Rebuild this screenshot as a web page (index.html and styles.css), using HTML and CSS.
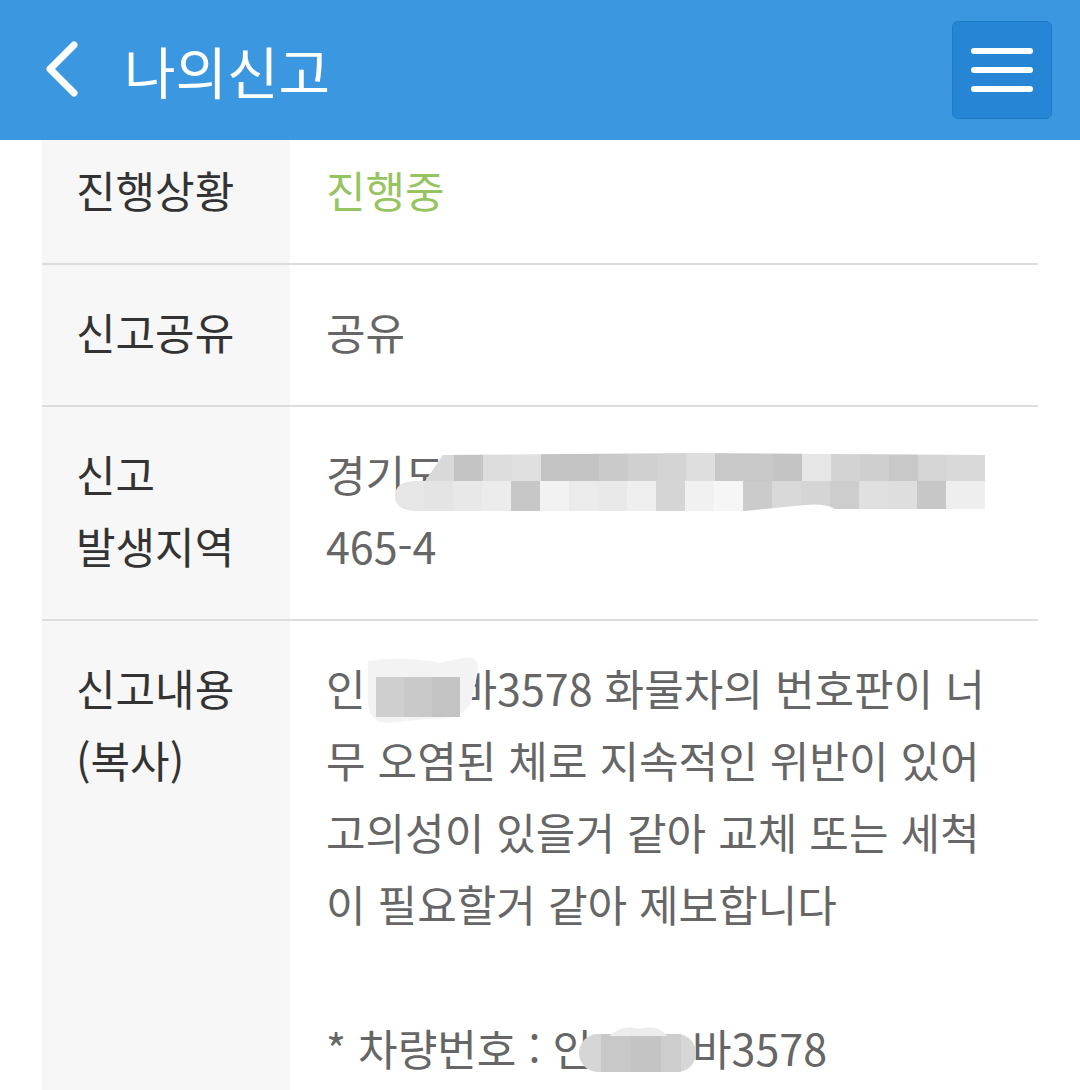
FILE: index.html
```html
<!DOCTYPE html>
<html lang="ko">
<head>
<meta charset="utf-8">
<title>나의신고</title>
<link rel="stylesheet" href="styles.css">
</head>
<body>
<header class="appbar">
  <button class="back" aria-label="뒤로">
    <svg width="40" height="60" viewBox="0 0 40 60"><polyline points="32,5 8,29 32,53" fill="none" stroke="#fff" stroke-width="7" stroke-linecap="round" stroke-linejoin="round"/></svg>
  </button>
  <h1 class="title">나의신고</h1>
  <button class="menu" aria-label="메뉴"><span></span><span></span><span></span></button>
</header>
<main class="detail">
  <div class="row first">
    <div class="label">진행상황</div>
    <div class="value status">진행중</div>
  </div>
  <div class="row">
    <div class="label">신고공유</div>
    <div class="value">공유</div>
  </div>
  <div class="row">
    <div class="label">신고<br>발생지역</div>
    <div class="value addr">경기도<br>465-4
      <svg class="redact-addr" width="590" height="58" viewBox="0 0 590 58">
        <defs>
          <clipPath id="addrclip">
            <path d="M48 2 L300 0 L590 2 L590 56 L440 56 Q430 50 410 52 L350 58 L22 58 Q0 58 0 43 Q0 28 22 28 L30 28 Z"/>
          </clipPath>
        </defs>
        <g clip-path="url(#addrclip)">
          <rect x="30" y="0" width="29" height="28" fill="#d9d9d9"/>
          <rect x="59" y="0" width="29" height="28" fill="#c4c4c4"/>
          <rect x="88" y="0" width="29" height="28" fill="#dcdcdc"/>
          <rect x="117" y="0" width="29" height="28" fill="#e0e0e0"/>
          <rect x="146" y="0" width="29" height="28" fill="#c3c3c3"/>
          <rect x="175" y="0" width="29" height="28" fill="#c3c3c3"/>
          <rect x="204" y="0" width="29" height="28" fill="#cacaca"/>
          <rect x="233" y="0" width="29" height="28" fill="#d0d0d0"/>
          <rect x="262" y="0" width="29" height="28" fill="#d4d4d4"/>
          <rect x="291" y="0" width="29" height="28" fill="#dedede"/>
          <rect x="320" y="0" width="29" height="28" fill="#c8c8c8"/>
          <rect x="349" y="0" width="29" height="28" fill="#c8c8c8"/>
          <rect x="378" y="0" width="29" height="28" fill="#c4c4c4"/>
          <rect x="407" y="0" width="29" height="28" fill="#e6e6e6"/>
          <rect x="436" y="0" width="29" height="28" fill="#d3d3d3"/>
          <rect x="465" y="0" width="29" height="28" fill="#cfcfcf"/>
          <rect x="494" y="0" width="29" height="28" fill="#c8c8c8"/>
          <rect x="523" y="0" width="29" height="28" fill="#d6d6d6"/>
          <rect x="552" y="0" width="38" height="28" fill="#d9d9d9"/>
          <rect x="0" y="28" width="29" height="30" fill="#e6e6e6"/>
          <rect x="29" y="28" width="29" height="30" fill="#e4e4e4"/>
          <rect x="58" y="28" width="29" height="30" fill="#e8e8e8"/>
          <rect x="87" y="28" width="29" height="30" fill="#ececec"/>
          <rect x="116" y="28" width="29" height="30" fill="#c7c7c7"/>
          <rect x="145" y="28" width="29" height="30" fill="#f2f2f2"/>
          <rect x="174" y="28" width="29" height="30" fill="#ebebeb"/>
          <rect x="203" y="28" width="29" height="30" fill="#e9e9e9"/>
          <rect x="232" y="28" width="29" height="30" fill="#efefef"/>
          <rect x="261" y="28" width="29" height="30" fill="#d5d5d5"/>
          <rect x="290" y="28" width="29" height="30" fill="#f1f1f1"/>
          <rect x="319" y="28" width="29" height="30" fill="#f6f6f6"/>
          <rect x="348" y="28" width="29" height="30" fill="#cbcbcb"/>
          <rect x="377" y="28" width="29" height="30" fill="#d9d9d9"/>
          <rect x="406" y="28" width="29" height="30" fill="#d5d5d5"/>
          <rect x="435" y="28" width="29" height="30" fill="#cdcdcd"/>
          <rect x="464" y="28" width="29" height="30" fill="#e0e0e0"/>
          <rect x="493" y="28" width="29" height="30" fill="#dedede"/>
          <rect x="522" y="28" width="29" height="30" fill="#c7c7c7"/>
          <rect x="551" y="28" width="39" height="30" fill="#eeeeee"/>
        </g>
      </svg>
    </div>
  </div>
  <div class="row">
    <div class="label">신고내용<br>(복사)</div>
    <div class="value content">인<span class="hide hide1">
        <svg class="blob1" width="120" height="70" viewBox="0 0 120 70">
          <path d="M6 6 Q40 0 78 8 L100 3 Q118 0 116 16 L110 44 Q104 66 66 64 L24 68 Q4 66 6 40 Z" fill="#f3f3f3"/>
          <rect x="14" y="22" width="28" height="40" fill="#cfcfcf"/>
          <rect x="42" y="22" width="28" height="40" fill="#c9c9c9"/>
          <rect x="70" y="22" width="28" height="40" fill="#c3c3c3"/>
        </svg></span>바3578 화물차의 번호판이 너<br>무 오염된 체로 지속적인 위반이 있어<br>고의성이 있을거 같아 교체 또는 세척<br>이 필요할거 같아 제보합니다<br><br>* 차량번호 : 인<span class="hide hide2">
        <svg class="blob2" width="117" height="46" viewBox="0 0 117 46">
          <rect x="0" y="8" width="117" height="38" rx="19" fill="#d6d6d6"/>
          <rect x="22" y="8" width="30" height="38" fill="#c8c8c8"/>
          <rect x="52" y="8" width="30" height="38" fill="#c4c4c4"/>
          <rect x="82" y="8" width="20" height="38" fill="#cdcdcd"/>
          <path d="M30 10 Q44 -2 60 3 Q80 -2 88 10 Z" fill="#ececec"/>
        </svg></span>바3578</div>
  </div>
</main>
</body>
</html>
```
FILE: styles.css
```css
html, body {
  margin: 0;
  padding: 0;
  background: #ffffff;
}
body {
  width: 1080px;
  font-family: "Noto Sans CJK KR", "Noto Sans", sans-serif;
  overflow: hidden;
}
.appbar {
  height: 140px;
  background: #3a97e0;
  display: flex;
  align-items: center;
}
.back {
  margin: 0 0 0 42px;
  padding: 0;
  border: 0;
  background: none;
  width: 40px;
  height: 60px;
  display: flex;
}
.title {
  margin: 0 0 0 42px;
  font-size: 56px;
  font-weight: 400;
  color: #ffffff;
  line-height: 1;
}
.menu {
  margin: 0 28px 0 auto;
  width: 100px;
  height: 98px;
  padding: 0;
  background: #2686d5;
  border: 1px solid #1f7ac6;
  border-radius: 6px;
  display: flex;
  flex-direction: column;
  align-items: center;
  justify-content: center;
  gap: 13px;
}
.menu span {
  display: block;
  width: 62px;
  height: 6px;
  border-radius: 3px;
  background: #ffffff;
}
.detail {
  margin: 0 42px;
}
.row {
  display: grid;
  grid-template-columns: 248px 1fr;
  border-bottom: 2px solid #dddddd;
}
.label {
  background: #f7f7f7;
  padding: 30px 0 38px 34px;
  font-size: 43px;
  line-height: 72px;
  color: #333333;
}
.value {
  padding: 30px 0 38px 36px;
  font-size: 43px;
  line-height: 72px;
  color: #666666;
  white-space: nowrap;
}
.row.first .label,
.row.first .value {
  padding-top: 13px;
}
.status {
  color: #96c460;
}
.addr {
  position: relative;
}
.redact-addr {
  position: absolute;
  left: 105px;
  top: 46px;
}
.hide {
  display: inline-block;
  position: relative;
  height: 40px;
  vertical-align: middle;
}
.hide1 {
  width: 92px;
}
.hide2 {
  width: 100px;
}
.blob1 {
  position: absolute;
  left: -4px;
  top: -19px;
}
.blob2 {
  position: absolute;
  left: -13px;
  top: -8px;
}
```
